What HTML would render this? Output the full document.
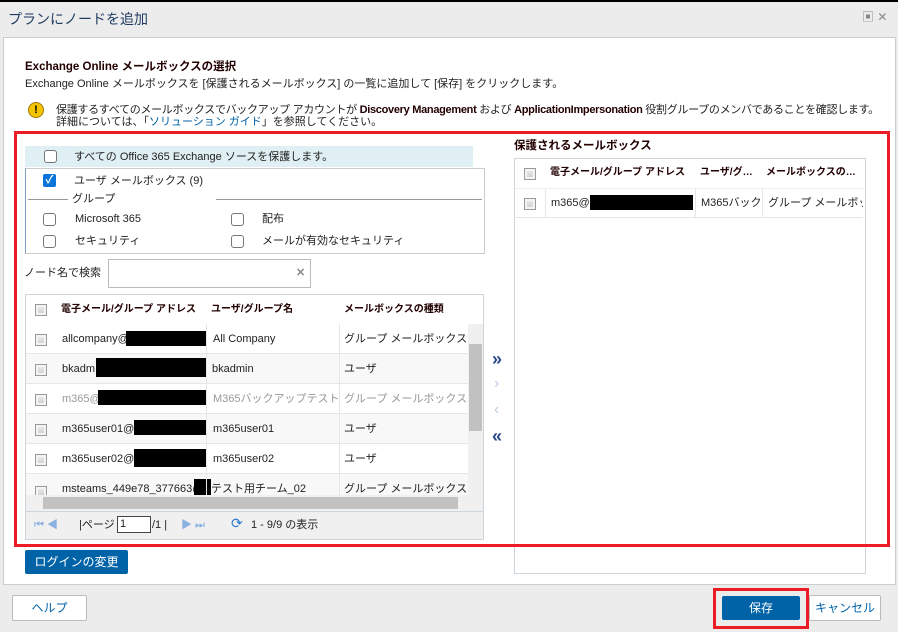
<!DOCTYPE html>
<html><head><meta charset="utf-8"><style>
*{box-sizing:border-box;margin:0;padding:0}
body{width:898px;height:632px;overflow:hidden;background:#ececec;font-family:"Liberation Sans","Noto Sans CJK JP",sans-serif;font-size:11px;color:#222;position:relative}
.a{position:absolute}
.cb{position:absolute;width:13px;height:13px;border:1px solid #777;border-radius:3px;background:#fff}
.gcb{position:absolute;width:12px;height:12px;border:1px solid #999;background:linear-gradient(#eee,#ccc);box-shadow:inset 0 0 0 2px #f4f4f4}
.t{position:absolute;white-space:nowrap;line-height:14px}
.row{position:absolute;left:0;width:442px;height:30px;border-bottom:1px solid #e6e6e6;overflow:hidden}
.red{position:absolute;border:3px solid #ed1c24}
.btn{position:absolute;background:#0063a8;color:#fff;text-align:center;border-radius:2px;font-size:12px}
.wbtn{position:absolute;background:#fff;border:1px solid #bbb;border-radius:2px;color:#0063a8;text-align:center;font-size:12px}
.hd{font-weight:bold;color:#220000;font-size:10px}
</style></head><body>
<div class="a" style="left:0;top:0;width:898px;height:2px;background:#000"></div>
<div class="t" style="left:8px;top:10px;font-size:14px;line-height:18px;color:#1f3a5f">プランにノードを追加</div>
<div class="t" style="left:862px;top:10px;font-size:12px;color:#888">▣ ✕</div>
<div class="a" style="left:3px;top:37px;width:893px;height:548px;background:#fff;border:1px solid #ccc"></div>
<div class="t" style="left:25px;top:60px;font-weight:bold;color:#220000;font-size:11.5px">Exchange Online メールボックスの選択</div>
<div class="t" style="left:25px;top:77px">Exchange Online メールボックスを [保護されるメールボックス] の一覧に追加して [保存] をクリックします。</div>
<div class="a" style="left:28px;top:102px;width:16px;height:16px;border-radius:50%;background:#f5c400;border:1px solid #a07800;color:#000;font-weight:bold;text-align:center;font-size:11px;line-height:14px">!</div>
<div class="t" style="left:56px;top:103px;letter-spacing:-0.3px">保護するすべてのメールボックスでバックアップ アカウントが <b style="color:#220000">Discovery Management</b> および <b style="color:#220000">ApplicationImpersonation</b> 役割グループのメンバであることを確認します。</div>
<div class="t" style="left:56px;top:115px">詳細については、「<span style="color:#0063a8">ソリューション ガイド</span>」を参照してください。</div>

<div class="a" style="left:25px;top:146px;width:448px;height:21px;background:#e0eff3"></div>
<div class="cb" style="left:44px;top:150px"></div>
<div class="t" style="left:74px;top:150px">すべての Office 365 Exchange ソースを保護します。</div>
<div class="a" style="left:25px;top:168px;width:460px;height:86px;border:1px solid #ccc;border-left:1px solid #7aa0c8"></div>
<div class="a" style="left:43px;top:174px;width:13px;height:13px;background:#0a74da;border-radius:2px;color:#fff;font-size:11px;line-height:13px;text-align:center;font-weight:bold">✓</div>
<div class="t" style="left:74px;top:174px">ユーザ メールボックス (9)</div>
<div class="a" style="left:28px;top:199px;width:40px;height:1px;background:#999"></div>
<div class="t" style="left:72px;top:192px">グループ</div>
<div class="a" style="left:216px;top:199px;width:266px;height:1px;background:#999"></div>
<div class="cb" style="left:43px;top:213px"></div><div class="t" style="left:75px;top:212px">Microsoft 365</div>
<div class="cb" style="left:231px;top:213px"></div><div class="t" style="left:262px;top:212px">配布</div>
<div class="cb" style="left:43px;top:235px"></div><div class="t" style="left:75px;top:234px">セキュリティ</div>
<div class="cb" style="left:231px;top:235px"></div><div class="t" style="left:262px;top:234px">メールが有効なセキュリティ</div>
<div class="t" style="left:24px;top:266px">ノード名で検索</div>
<div class="a" style="left:108px;top:259px;width:203px;height:29px;border:1px solid #bbb"></div>
<div class="t" style="left:296px;top:266px;color:#888;font-weight:bold">✕</div>

<div class="a" style="left:25px;top:294px;width:459px;height:246px;border:1px solid #cdd5dd;background:#fff;overflow:hidden">
 <div class="gcb" style="left:9px;top:9px"></div>
 <div class="t hd" style="left:35px;top:8px">電子メール/グループ アドレス</div>
 <div class="t hd" style="left:185px;top:8px">ユーザ/グループ名</div>
 <div class="t hd" style="left:318px;top:8px">メールボックスの種類</div>
 <div class="a" style="left:0;top:29px;width:442px;height:171px;overflow:hidden">
  <div class="row" style="top:0"><div class="gcb" style="left:9px;top:10px"></div><div class="t" style="left:36px;top:8px">allcompany@</div><div class="a" style="left:100px;top:7px;width:80px;height:15px;background:#000"></div><div class="t" style="left:187px;top:8px">All Company</div><div class="t" style="left:318px;top:8px">グループ メールボックス</div></div>
  <div class="row" style="top:30px;background:#f8f8f8"><div class="gcb" style="left:9px;top:10px"></div><div class="t" style="left:36px;top:8px">bkadm</div><div class="a" style="left:70px;top:4px;width:111px;height:19px;background:#000"></div><div class="t" style="left:186px;top:8px">bkadmin</div><div class="t" style="left:318px;top:8px">ユーザ</div></div>
  <div class="row" style="top:60px;color:#999"><div class="gcb" style="left:9px;top:10px"></div><div class="t" style="left:36px;top:8px">m365@</div><div class="a" style="left:72px;top:6px;width:109px;height:15px;background:#000"></div><div class="t" style="left:187px;top:8px">M365バックアップテスト</div><div class="t" style="left:318px;top:8px">グループ メールボックス</div></div>
  <div class="row" style="top:90px;background:#f8f8f8"><div class="gcb" style="left:9px;top:10px"></div><div class="t" style="left:36px;top:8px">m365user01@</div><div class="a" style="left:108px;top:6px;width:73px;height:15px;background:#000"></div><div class="t" style="left:187px;top:8px">m365user01</div><div class="t" style="left:318px;top:8px">ユーザ</div></div>
  <div class="row" style="top:120px"><div class="gcb" style="left:9px;top:10px"></div><div class="t" style="left:36px;top:8px">m365user02@</div><div class="a" style="left:108px;top:5px;width:73px;height:18px;background:#000"></div><div class="t" style="left:187px;top:8px">m365user02</div><div class="t" style="left:318px;top:8px">ユーザ</div></div>
  <div class="row" style="top:150px;background:#f8f8f8"><div class="gcb" style="left:9px;top:12px"></div><div class="t" style="left:36px;top:8px">msteams_449e78_377663@</div><div class="a" style="left:168px;top:5px;width:17px;height:17px;background:#000"></div><div class="t" style="left:185px;top:8px;background:#f8f8f8">テスト用チーム_02</div><div class="t" style="left:318px;top:8px">グループ メールボックス</div></div>
  <div class="a" style="left:180px;top:0;width:1px;height:171px;background:#e6e6e6"></div>
  <div class="a" style="left:313px;top:0;width:1px;height:171px;background:#e6e6e6"></div>
 </div>
 <div class="a" style="left:442px;top:29px;width:16px;height:171px;background:#f0f0f0"><div class="a" style="left:1px;top:20px;width:13px;height:87px;background:#c1c1c1"></div></div>
 <div class="a" style="left:0;top:200px;width:458px;height:16px;background:#f0f0f0"><div class="a" style="left:17px;top:2px;width:415px;height:12px;background:#c1c1c1"></div></div>
 <div class="a" style="left:0;top:216px;width:458px;height:30px;background:#f0f0f0;border-top:1px solid #cdd5dd"></div>
 <div class="t" style="left:8px;top:223px;color:#8ab0e0">⏮ ◀</div>
 <div class="t" style="left:53px;top:223px">|ページ</div>
 <div class="a" style="left:91px;top:221px;width:34px;height:17px;border:1px solid #444;background:#fff;padding-left:2px;line-height:15px">1</div>
 <div class="t" style="left:126px;top:223px">/1 |</div>
 <div class="t" style="left:155px;top:223px;color:#8ab0e0">▶ ⏭</div>
 <div class="t" style="left:205px;top:221px;color:#2a7ad0;font-size:14px">⟳</div>
 <div class="t" style="left:225px;top:223px">1 - 9/9 の表示</div>
</div>

<div class="t" style="left:492px;top:350px;color:#2a4a8a;font-size:18px;line-height:18px;font-weight:bold">»</div>
<div class="t" style="left:494px;top:376px;color:#c0cce0;font-size:16px;line-height:16px">›</div>
<div class="t" style="left:494px;top:402px;color:#c0cce0;font-size:16px;line-height:16px">‹</div>
<div class="t" style="left:492px;top:427px;color:#2a4a8a;font-size:18px;line-height:18px;font-weight:bold">«</div>

<div class="t" style="left:514px;top:139px;font-weight:bold;color:#220000;font-size:11.5px">保護されるメールボックス</div>
<div class="a" style="left:514px;top:158px;width:352px;height:416px;border:1px solid #cdd5dd;background:#fff;overflow:hidden">
 <div class="gcb" style="left:9px;top:9px"></div>
 <div class="t hd" style="left:35px;top:7px">電子メール/グループ アドレス</div>
 <div class="t hd" style="left:185px;top:7px">ユーザ/グ…</div>
 <div class="t hd" style="left:251px;top:7px">メールボックスの…</div>
 <div class="a" style="left:0;top:29px;width:348px;height:30px;border-bottom:1px solid #e6e6e6;border-top:1px solid #eee">
  <div class="gcb" style="left:9px;top:9px"></div>
  <div class="a" style="left:30px;top:0;width:1px;height:29px;background:#e6e6e6"></div>
  <div class="t" style="left:36px;top:7px">m365@</div>
  <div class="a" style="left:75px;top:6px;width:103px;height:15px;background:#000"></div>
  <div class="a" style="left:180px;top:0;width:1px;height:29px;background:#e6e6e6"></div>
  <div class="t" style="left:186px;top:7px;width:60px;overflow:hidden">M365バックア</div>
  <div class="a" style="left:247px;top:0;width:1px;height:29px;background:#e6e6e6"></div>
  <div class="t" style="left:253px;top:7px;width:95px;overflow:hidden">グループ メールボック</div>
 </div>
</div>

<div class="red" style="left:14px;top:131px;width:876px;height:416px"></div>
<div class="btn" style="left:25px;top:550px;width:103px;height:24px;line-height:24px">ログインの変更</div>
<div class="wbtn" style="left:12px;top:595px;width:75px;height:26px;line-height:24px">ヘルプ</div>
<div class="red" style="left:713px;top:588px;width:96px;height:41px"></div>
<div class="btn" style="left:722px;top:596px;width:78px;height:24px;line-height:24px">保存</div>
<div class="wbtn" style="left:809px;top:595px;width:72px;height:26px;line-height:24px">キャンセル</div>
</body></html>
